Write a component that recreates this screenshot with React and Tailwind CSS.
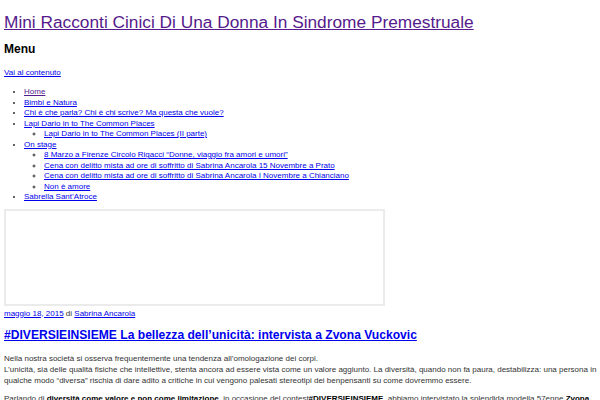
export default function App() {
  const menu = [
    { label: 'Home', visited: true },
    { label: 'Bimbi e Natura' },
    { label: 'Chi è che parla? Chi è chi scrive? Ma questa che vuole?' },
    { label: 'Lapi Dario in to The Common Places', children: ['Lapi Dario in to The Common Places (II parte)'] },
    {
      label: 'On stage',
      children: [
        '8 Marzo a Firenze Circolo Rigacci “Donne, viaggio fra amori e umori”',
        'Cena con delitto mista ad ore di soffritto di Sabrina Ancarola 15 Novembre a Prato',
        'Cena con delitto mista ad ore di soffritto di Sabrina Ancarola I Novembre a Chianciano',
        'Non è amore',
      ],
    },
    { label: 'Sabrella Sant’Atroce' },
  ]

  return (
    <div className="min-h-[400px] bg-white pl-1 pr-[2px] pt-[12px] text-[#333] font-['Liberation_Sans',Arial,sans-serif] overflow-hidden">
      {/* Site title */}
      <h1 className="text-[17.3px] leading-5">
        <a href="#" className="text-[#551a8b] underline">Mini Racconti Cinici Di Una Donna In Sindrome Premestruale</a>
      </h1>

      {/* Menu */}
      <h2 className="mt-[9px] text-[12px] font-bold leading-4 text-black">Menu</h2>
      <a href="#" className="mt-[10px] block text-[8px] leading-[11px] text-[#0000ee] underline">Vai al contenuto</a>

      <ul className="mt-[9px] list-disc pl-[20px] text-[8px] leading-[10.5px]">
        {menu.map((item) => (
          <li key={item.label}>
            <a href="#" className={item.visited ? 'text-[#551a8b] underline' : 'text-[#0000ee] underline'}>{item.label}</a>
            {item.children && (
              <ul className="list-[circle] pl-[20px]">
                {item.children.map((c) => (
                  <li key={c}>
                    <a href="#" className="text-[#0000ee] underline">{c}</a>
                  </li>
                ))}
              </ul>
            )}
          </li>
        ))}
      </ul>

      {/* Empty embed box */}
      <div className="mt-[6px] h-[97px] w-[381px] border-2 border-[#ebebeb]"></div>

      {/* Post meta */}
      <div className="mt-[2px] text-[8px] leading-[11px] text-[#333]">
        <a href="#" className="text-[#0000ee] underline">maggio 18, 2015</a> di{' '}
        <a href="#" className="text-[#0000ee] underline">Sabrina Ancarola</a>
      </div>

      {/* Post */}
      <h2 className="mt-[8px] text-[12.1px] font-bold leading-4">
        <a href="#" className="text-[#0000ee] underline">#DIVERSIEINSIEME La bellezza dell’unicità: intervista a Zvona Vuckovic</a>
      </h2>

      <p className="mt-[10px] text-[8px] leading-[11px]">
        Nella nostra società si osserva frequentemente una tendenza all’omologazione dei corpi.
        <br />
        L’unicità, sia delle qualità fisiche che intellettive, stenta ancora ad essere vista come un valore aggiunto. La diversità, quando non fa paura, destabilizza: una persona in qualche modo “diversa” rischia di dare adito a critiche in cui vengono palesati stereotipi dei benpensanti su come dovremmo essere.
      </p>
      <p className="mt-[7px] text-[8px] leading-[11px]">
        Parlando di <strong className="text-black">diversità come valore e non come limitazione</strong>, in occasione del contest<strong className="text-black">#DIVERSIEINSIEME</strong>, abbiamo intervistato la splendida modella 57enne <strong className="text-black">Zvona Vuckovic</strong>.
      </p>
    </div>
  )
}
